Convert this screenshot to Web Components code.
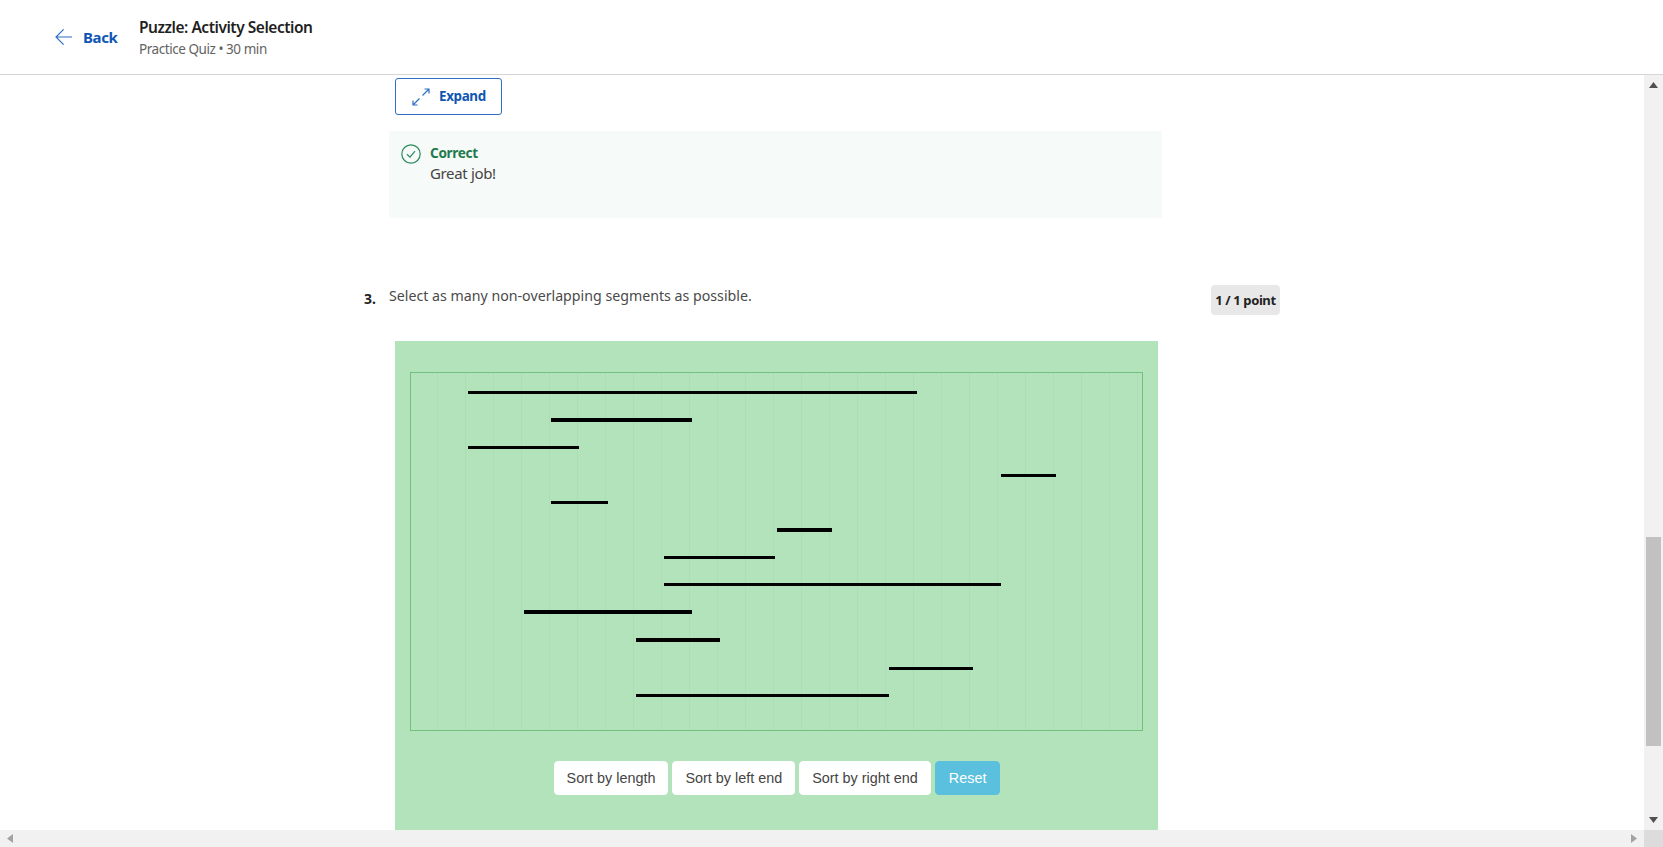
<!DOCTYPE html>
<html lang="en">
<head>
<meta charset="utf-8">
<title>Puzzle: Activity Selection</title>
<style>
  html, body { margin: 0; height: 100%; overflow: hidden; background: #fff; }
  body { font-family: "Noto Sans", "Open Sans", sans-serif; }
</style>
</head>
<body>
<quiz-app>
  <quiz-header slot="header" title-text="Puzzle: Activity Selection" sub-text="Practice Quiz • 30 min"></quiz-header>
  <expand-button></expand-button>
  <correct-note>Great job!</correct-note>
  <quiz-question number="3." points="1 / 1 point">Select as many non-overlapping segments as possible.</quiz-question>
  <segment-puzzle></segment-puzzle>
</quiz-app>

<script>
class QuizApp extends HTMLElement{
    constructor(){
        super();
        this.attachShadow({mode:'open'})
        this.shadowRoot.innerHTML=`
        <style>
            :host{ display:grid; grid-template-columns:1fr 19px; grid-template-rows:75px 1fr 17px; height:847px; width:1663px; overflow:hidden; }
            .top{ grid-column:1 / 3; }
            .main{ overflow:hidden; padding:3px 0 0 389px; box-sizing:border-box; min-height:0; }
        </style>
        <div class="top"><slot name="header"></slot></div>
        <div class="main"><slot></slot></div>
        <fake-scrollbar dir="v"></fake-scrollbar>
        <fake-scrollbar dir="h"></fake-scrollbar>
        <div style="background:#dcdcdc"></div>
        `
    }
}

class QuizHeader extends HTMLElement{
    constructor(){
        super();
        this.attachShadow({mode:'open'})
    }
    connectedCallback(){
        this.shadowRoot.innerHTML=`
        <style>
            :host{ display:flex; align-items:center; height:75px; box-sizing:border-box; border-bottom:1px solid #d5d5d5; padding:1px 0 0 55px; }
            .back{ display:flex; align-items:center; gap:10px; color:#0f56b3; font-size:15px; font-weight:700; width:84px; margin-top:-1px; }
            .t{ font-size:15.5px; font-weight:600; color:#1f1f1f; line-height:20px; letter-spacing:-.47px; }
            .s{ font-size:13.5px; color:#636363; line-height:20px; margin-top:2px; letter-spacing:-.45px; }
            .back span{ letter-spacing:-.4px; }
        </style>
        <div class="back">
            <svg width="18" height="18" viewBox="0 0 18 18" fill="none" stroke="#2f6fc4" stroke-width="1.2"><path d="M17 9H1.2M8.6 1.4 1 9l7.6 7.6"/></svg>
            <span>Back</span>
        </div>
        <div>
            <div class="t">${this.getAttribute('title-text')}</div>
            <div class="s">${this.getAttribute('sub-text')}</div>
        </div>
        `
    }
}

class ExpandButton extends HTMLElement{
    constructor(){
        super();
        this.attachShadow({mode:'open'})
        this.shadowRoot.innerHTML=`
        <style>
            :host{ display:flex; align-items:center; gap:9px; width:107px; height:37px; box-sizing:border-box; margin-left:6px; padding-left:16px; border:1px solid #2f6fc4; border-radius:3px; color:#0f56b3; font-size:13.4px; font-weight:700; letter-spacing:-.35px; }
            span{ margin-top:-2px; }
        </style>
        <svg width="18" height="18" viewBox="0 0 18 18" fill="none" stroke="#2f6fc4" stroke-width="1.2"><path d="M10.5 7.5 17 1M12.5 1H17V5.5M1 17 7.5 10.5M1 12.5V17H5.5"/></svg>
        <span>Expand</span>
        `
    }
}

class CorrectNote extends HTMLElement{
    constructor(){
        super();
        this.attachShadow({mode:'open'})
        this.shadowRoot.innerHTML=`
        <style>
            :host{ display:flex; gap:9px; width:773px; height:87px; box-sizing:border-box; margin:16px 0 0 0; padding:12px 0 0 12px; background:#f6faf8; }
            svg{ flex:none; margin-top:1px; }
            .c{ color:#1f7a4d; font-size:13.6px; font-weight:700; line-height:20px; letter-spacing:-.35px; }
            .m{ color:#444; font-size:15px; line-height:20px; letter-spacing:-.35px; }
        </style>
        <svg width="20" height="20" viewBox="0 0 20 20" fill="none" stroke="#2e8a5f" stroke-width="1.2"><circle cx="10" cy="10" r="9.2"/><path d="M6 10.3l3 2.9 5-6"/></svg>
        <div>
            <div class="c">Correct</div>
            <div class="m"><slot></slot></div>
        </div>
        `
    }
}

class QuizQuestion extends HTMLElement{
    constructor(){
        super();
        this.attachShadow({mode:'open'})
    }
    connectedCallback(){
        this.shadowRoot.innerHTML=`
        <style>
            :host{ display:block; position:relative; width:891px; height:56px; margin-top:71px; }
            .n{ position:absolute; left:-25px; top:3px; font-size:14px; font-weight:700; color:#1f1f1f; line-height:22px; }
            .q{ font-size:14.2px; color:#4a4a4a; line-height:22px; display:block; margin-top:-4px; }
            .p{ position:absolute; left:822px; top:0; height:30px; width:69px; box-sizing:border-box; background:#e8e8e8; border-radius:4px; text-align:center; font-size:13px; font-weight:700; line-height:30px; color:#222; letter-spacing:-.4px; }
        </style>
        <span class="n">${this.getAttribute('number')}</span>
        <span class="q"><slot></slot></span>
        <span class="p">${this.getAttribute('points')}</span>
        `
    }
}

// [x1, x2, y, thickness] in board coordinates
const SEGMENTS=[
    [58,507,20,3],[141,282,48,4],[58,169,75,3],[591,646,103,3],
    [141,198,130,3],[367,422,158,4],[254,365,185,3],[254,591,212,3],
    [114,282,240,4],[226,310,268,4],[479,563,296,3],[226,479,323,3]
]

class SegmentPuzzle extends HTMLElement{
    constructor(){
        super();
        this.attachShadow({mode:'open'})
    }
    connectedCallback(){
        let grid=''
        for(let x=28;x<732;x+=28){
            grid+=`<path d="M${x-.5} 1V358" stroke="#adddb5" stroke-width="1"/>`
        }
        const lines=SEGMENTS.map(([a,b,y,w])=>`<rect x="${a}" y="${y-w/2}" width="${b-a}" height="${w}" fill="#000"/>`).join('')
        this.shadowRoot.innerHTML=`
        <style>
            :host{ display:block; width:763px; height:600px; margin-left:6px; padding:31px 15px 0; box-sizing:border-box; background:#b2e3bb; }
            svg{ display:block; }
            .btns{ display:flex; justify-content:center; gap:4px; margin-top:30px; margin-left:1px; }
            button{ height:34px; padding:0 12px; border:1px solid #fff; border-radius:4px; background:#fff; color:#444; font:14.4px/20px "Liberation Sans", Arial, sans-serif; }
            button.r{ background:#5bc0de; border-color:#5bc0de; color:#fff; padding:0 13px; }
        </style>
        <svg width="733" height="359" viewBox="0 0 733 359" shape-rendering="crispEdges">
            ${grid}
            <rect x=".5" y=".5" width="732" height="358" fill="none" stroke="#74c07e"/>
            ${lines}
        </svg>
        <div class="btns">
            <button>Sort by length</button><button>Sort by left end</button><button>Sort by right end</button><button class="r">Reset</button>
        </div>
        `
    }
}

class FakeScrollbar extends HTMLElement{
    constructor(){
        super();
        this.attachShadow({mode:'open'})
    }
    connectedCallback(){
        const v=this.getAttribute('dir')=='v'
        this.shadowRoot.innerHTML=v?`
        <style>
            :host{ display:flex; flex-direction:column; justify-content:space-between; background:#f1f1f1; position:relative; }
            svg{ display:block; margin:7px 5px; }
            .thumb{ position:absolute; left:2px; right:2px; top:462px; height:209px; background:#c1c1c1; }
        </style>
        <svg width="9" height="6" viewBox="0 0 9 6"><path d="M4.5 0 9 6H0z" fill="#505050"/></svg>
        <div class="thumb"></div>
        <svg width="9" height="6" viewBox="0 0 9 6"><path d="M0 0h9L4.5 6z" fill="#505050"/></svg>
        `:`
        <style>
            :host{ display:flex; justify-content:space-between; align-items:center; background:#f1f1f1; }
            svg{ display:block; margin:0 7px; }
        </style>
        <svg width="6" height="9" viewBox="0 0 6 9"><path d="M6 0v9L0 4.5z" fill="#a3a3a3"/></svg>
        <svg width="6" height="9" viewBox="0 0 6 9"><path d="M0 0v9l6-4.5z" fill="#a3a3a3"/></svg>
        `
    }
}

customElements.define('fake-scrollbar',FakeScrollbar)
customElements.define('quiz-header',QuizHeader)
customElements.define('expand-button',ExpandButton)
customElements.define('correct-note',CorrectNote)
customElements.define('quiz-question',QuizQuestion)
customElements.define('segment-puzzle',SegmentPuzzle)
customElements.define('quiz-app',QuizApp)
</script>
</body>
</html>
